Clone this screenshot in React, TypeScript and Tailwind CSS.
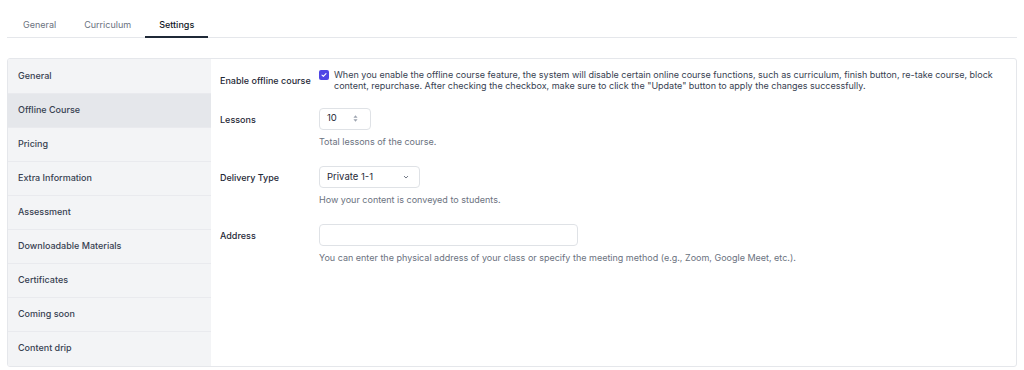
import { useState } from "react";

const menu = [
  "General",
  "Offline Course",
  "Pricing",
  "Extra Information",
  "Assessment",
  "Downloadable Materials",
  "Certificates",
  "Coming soon",
  "Content drip",
];

export default function App() {
  const [checked, setChecked] = useState(true);

  return (
    <div className="min-h-screen bg-white font-['Inter',sans-serif] text-[#1f2937]">
      {/* Tabs */}
      <div className="mx-[7px] flex border-b border-[#e5e7eb] pl-[2px] pt-[18px]">
        <div className="px-[14px] pb-[5px] text-[9px] text-[#6b7280]">General</div>
        <div className="px-[14px] pb-[5px] text-[9px] text-[#6b7280]">Curriculum</div>
        <div className="-mb-px border-b-2 border-[#1f2937] px-[14px] pb-[4px] text-[9px] font-medium text-[#111827]">
          Settings
        </div>
      </div>

      {/* Card */}
      <div className="mx-[7px] mt-[20px] flex h-[309px] overflow-hidden rounded-[3px] border border-[#e5e7eb]">
        <div className="w-[203px] shrink-0 bg-[#f3f4f6]">
          {menu.map((m, i) => (
            <div
              key={m}
              className={`flex h-[34px] items-center px-[10px] text-[9px] font-medium text-[#374151] ${
                i > 0 ? "border-t border-[#e9eaee]" : ""
              } ${m === "Offline Course" ? "bg-[#e5e7eb]" : ""}`}
            >
              {m}
            </div>
          ))}
        </div>

        <div className="flex-1 pl-[9px] pr-[10px] pt-[10px]">
          {/* Enable offline course */}
          <div className="flex">
            <div className="w-[99px] shrink-0 pt-[5px] text-[9px] font-medium">Enable offline course</div>
            <div className="flex gap-[5px]">
              <button
                onClick={() => setChecked(!checked)}
                className={`mt-[1px] flex h-[10px] w-[10px] shrink-0 items-center justify-center rounded-[2px] ${
                  checked ? "bg-[#4f46e5]" : "border border-gray-300 bg-white"
                }`}
              >
                {checked && (
                  <svg viewBox="0 0 10 10" className="h-[8px] w-[8px]">
                    <path d="M2.5 5.2 L4.2 6.8 L7.5 3.2" fill="none" stroke="white" strokeWidth="1.3" strokeLinecap="round" strokeLinejoin="round" />
                  </svg>
                )}
              </button>
              <p className="text-[9px] leading-[11px] text-[#374151]">
                When you enable the offline course feature, the system will disable certain online course functions, such as curriculum, finish button, re-take course, block content, repurchase. After checking the checkbox, make sure to click the "Update" button to apply the changes successfully.
              </p>
            </div>
          </div>

          {/* Lessons */}
          <div className="mt-[17px] flex">
            <div className="w-[99px] shrink-0 pt-[5px] text-[9px] font-medium">Lessons</div>
            <div>
              <div className="flex h-[22px] w-[52px] items-center justify-between rounded-[4px] border border-[#dfe2e6] pl-[7px] pr-[12px] text-[9.5px]">
                <span>10</span>
                <svg viewBox="0 0 6 10" className="h-[9px] w-[5px] text-[#9ca3af]">
                  <path d="M0.5 4 L3 1 L5.5 4 Z" fill="currentColor" />
                  <path d="M0.5 6 L3 9 L5.5 6 Z" fill="currentColor" />
                </svg>
              </div>
              <p className="mt-[5px] text-[9px] text-[#6b7280]">Total lessons of the course.</p>
            </div>
          </div>

          {/* Delivery type */}
          <div className="mt-[18px] flex">
            <div className="w-[99px] shrink-0 pt-[5px] text-[9px] font-medium">Delivery Type</div>
            <div>
              <div className="flex h-[22px] w-[101px] items-center justify-between rounded-[4px] border border-[#dfe2e6] pl-[7px] pr-[9px] text-[9.5px]">
                <span>Private 1-1</span>
                <svg viewBox="0 0 10 10" className="h-[8px] w-[8px] text-[#6b7280]">
                  <path d="M2.5 3.8 L5 6.3 L7.5 3.8" fill="none" stroke="currentColor" strokeWidth="1.2" />
                </svg>
              </div>
              <p className="mt-[5px] text-[9px] text-[#6b7280]">How your content is conveyed to students.</p>
            </div>
          </div>

          {/* Address */}
          <div className="mt-[17px] flex">
            <div className="w-[99px] shrink-0 pt-[5px] text-[9px] font-medium">Address</div>
            <div>
              <input className="block h-[22px] w-[259px] rounded-[4px] border border-[#dfe2e6] px-[7px] text-[9.5px] outline-none" />
              <p className="mt-[5px] text-[9px] text-[#6b7280]">
                You can enter the physical address of your class or specify the meeting method (e.g., Zoom, Google Meet, etc.).
              </p>
            </div>
          </div>
        </div>
      </div>
    </div>
  );
}
